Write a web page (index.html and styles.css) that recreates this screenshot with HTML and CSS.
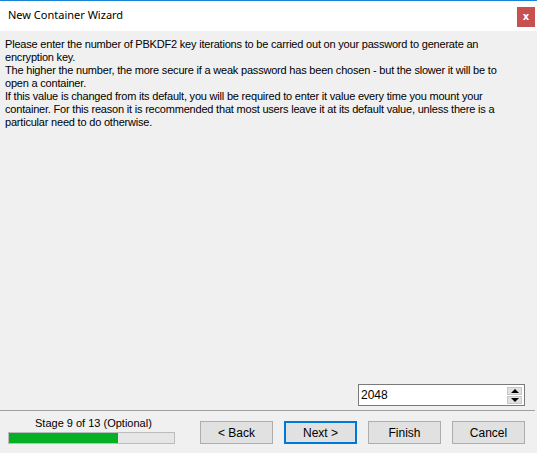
FILE: index.html
```html
<!DOCTYPE html>
<html lang="en">
<head>
    <meta charset="UTF-8">
    <title>New Container Wizard</title>
    <link rel="stylesheet" href="styles.css">
</head>
<body>
    <div class="window">
        <div class="titlebar">
            <span class="title">New Container Wizard</span>
            <button class="close-button">x</button>
        </div>

        <div class="content">
            <div class="description">
                Please enter the number of PBKDF2 key iterations to be carried out on your password to generate an<br>
                encryption key.<br>
                The higher the number, the more secure if a weak password has been chosen - but the slower it will be to<br>
                open a container.<br>
                If this value is changed from its default, you will be required to enter it value every time you mount your<br>
                container. For this reason it is recommended that most users leave it at its default value, unless there is a<br>
                particular need to do otherwise.
            </div>

            <div class="spin-row">
                <div class="spin-box">
                    <input class="spin-input" type="text" value="2048">
                    <div class="spin-buttons">
                        <span class="spin-up"></span>
                        <span class="spin-down"></span>
                    </div>
                </div>
            </div>

            <div class="footer">
                <div class="stage">
                    <div class="stage-label">Stage 9 of 13 (Optional)</div>
                    <div class="progress">
                        <div class="progress-fill" style="width: 66%"></div>
                    </div>
                </div>
                <div class="buttons">
                    <button class="wiz-button">&lt; Back</button>
                    <button class="wiz-button default">Next &gt;</button>
                    <button class="wiz-button">Finish</button>
                    <button class="wiz-button">Cancel</button>
                </div>
            </div>
        </div>
    </div>
</body>
</html>
```

FILE: styles.css
```css
body {
    margin: 0;
    padding: 0;
    background-color: #f0f0f0;
    font-family: "Liberation Sans", Arial, sans-serif;
    color: #000;
}

.window {
    width: 537px;
    height: 453px;
    display: flex;
    flex-direction: column;
    border-top: 1px solid #1883d7;
    box-sizing: border-box;
}

.titlebar {
    height: 30px;
    background-color: #fff;
    display: flex;
    align-items: flex-start;
    justify-content: space-between;
}

.title {
    font-family: "Noto Sans", sans-serif;
    font-size: 11px;
    margin: 6px 0 0 8px;
    color: #000;
}

.close-button {
    width: 18px;
    height: 20px;
    margin: 6px 2px 0 0;
    padding: 0;
    border: none;
    background-color: #c75050;
    color: #fff;
    font-family: "DejaVu Sans", sans-serif;
    font-weight: bold;
    font-size: 10px;
    line-height: 18px;
}

.content {
    flex: 1;
    background-color: #f0f0f0;
    display: flex;
    flex-direction: column;
}

.description {
    padding: 7px 0 0 5px;
    font-size: 11px;
    line-height: 13px;
    letter-spacing: -0.2px;
    white-space: nowrap;
}

.spin-row {
    margin-top: auto;
    display: flex;
    justify-content: flex-end;
    padding: 0 12px 4px 0;
}

.spin-box {
    width: 167px;
    height: 22px;
    box-sizing: border-box;
    border: 1px solid #7a7a7a;
    background-color: #fff;
    display: flex;
    align-items: center;
}

.spin-input {
    flex: 1;
    border: none;
    outline: none;
    padding: 0 0 0 2px;
    font-family: "Liberation Sans", Arial, sans-serif;
    font-size: 12px;
    background: transparent;
    min-width: 0;
}

.spin-buttons {
    width: 15px;
    display: flex;
    flex-direction: column;
    gap: 1px;
    margin-right: 2px;
}

.spin-up, .spin-down {
    height: 8px;
    background-color: #e0e0e0;
    border: 1px solid #c8c8c8;
    box-sizing: border-box;
    position: relative;
}

.spin-up::after, .spin-down::after {
    content: "";
    position: absolute;
    left: 3px;
    border-left: 4px solid transparent;
    border-right: 4px solid transparent;
}

.spin-up::after {
    top: 1px;
    border-bottom: 4px solid #000;
}

.spin-down::after {
    top: 1px;
    border-top: 4px solid #000;
}

.footer {
    border-top: 1px solid #a0a0a0;
    margin-right: 2px;
    height: 42px;
    display: flex;
    align-items: flex-start;
}

.stage {
    width: 200px;
    padding-left: 8px;
    box-sizing: border-box;
}

.stage-label {
    font-size: 11px;
    margin: 6px 0 0 27px;
    line-height: 13px;
}

.progress {
    width: 167px;
    height: 12px;
    margin-top: 2px;
    background-color: #e6e6e6;
    border: 1px solid #bcbcbc;
    box-sizing: border-box;
}

.progress-fill {
    height: 100%;
    background-color: #06b025;
}

.buttons {
    display: flex;
    gap: 11px;
    margin-top: 10px;
}

.wiz-button {
    width: 73px;
    height: 23px;
    background-color: #e1e1e1;
    border: 1px solid #adadad;
    font-family: "Liberation Sans", Arial, sans-serif;
    font-size: 12px;
    color: #000;
    padding: 0;
}

.wiz-button.default {
    border: 2px solid #0078d7;
}
```
